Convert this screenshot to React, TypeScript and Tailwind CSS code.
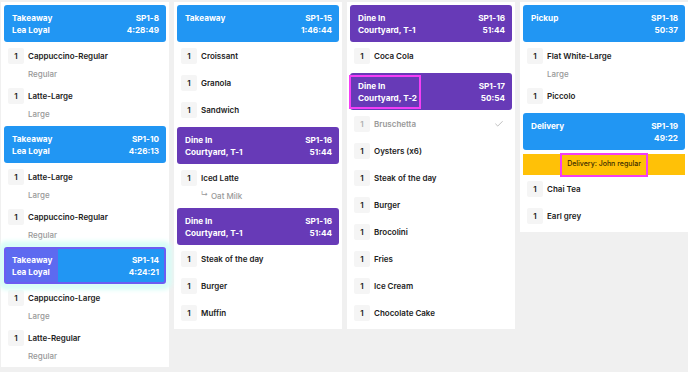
import { Check } from 'lucide-react';
import clsx from 'clsx';

type Item = {
  name: string;
  mod?: string;
  sub?: string;
  done?: boolean;
};

type Order = {
  type: string;
  where?: string;
  id: string;
  time: string;
  kind: 'blue' | 'purple';
  mark?: 'pink' | 'drag';
  banner?: string;
  items: Item[];
};

const columns: Order[][] = [
  [
    {
      type: 'Takeaway',
      where: 'Lea Loyal',
      id: 'SP1-8',
      time: '4:28:49',
      kind: 'blue',
      items: [
        { name: 'Cappuccino-Regular', mod: 'Regular' },
        { name: 'Latte-Large', mod: 'Large' },
      ],
    },
    {
      type: 'Takeaway',
      where: 'Lea Loyal',
      id: 'SP1-10',
      time: '4:26:13',
      kind: 'blue',
      items: [
        { name: 'Latte-Large', mod: 'Large' },
        { name: 'Cappuccino-Regular', mod: 'Regular' },
      ],
    },
    {
      type: 'Takeaway',
      where: 'Lea Loyal',
      id: 'SP1-14',
      time: '4:24:21',
      kind: 'blue',
      mark: 'drag',
      items: [
        { name: 'Cappuccino-Large', mod: 'Large' },
        { name: 'Latte-Regular', mod: 'Regular' },
      ],
    },
  ],
  [
    {
      type: 'Takeaway',
      id: 'SP1-15',
      time: '1:46:44',
      kind: 'blue',
      items: [{ name: 'Croissant' }, { name: 'Granola' }, { name: 'Sandwich' }],
    },
    {
      type: 'Dine In',
      where: 'Courtyard, T-1',
      id: 'SP1-16',
      time: '51:44',
      kind: 'purple',
      items: [{ name: 'Iced Latte', sub: 'Oat Milk' }],
    },
    {
      type: 'Dine In',
      where: 'Courtyard, T-1',
      id: 'SP1-16',
      time: '51:44',
      kind: 'purple',
      items: [{ name: 'Steak of the day' }, { name: 'Burger' }, { name: 'Muffin' }],
    },
  ],
  [
    {
      type: 'Dine In',
      where: 'Courtyard, T-1',
      id: 'SP1-16',
      time: '51:44',
      kind: 'purple',
      items: [{ name: 'Coca Cola' }],
    },
    {
      type: 'Dine In',
      where: 'Courtyard, T-2',
      id: 'SP1-17',
      time: '50:54',
      kind: 'purple',
      mark: 'pink',
      items: [
        { name: 'Bruschetta', done: true },
        { name: 'Oysters (x6)' },
        { name: 'Steak of the day' },
        { name: 'Burger' },
        { name: 'Brocolini' },
        { name: 'Fries' },
        { name: 'Ice Cream' },
        { name: 'Chocolate Cake' },
      ],
    },
  ],
  [
    {
      type: 'Pickup',
      id: 'SP1-18',
      time: '50:37',
      kind: 'blue',
      items: [{ name: 'Flat White-Large', mod: 'Large' }, { name: 'Piccolo' }],
    },
    {
      type: 'Delivery',
      id: 'SP1-19',
      time: '49:22',
      kind: 'blue',
      banner: 'Delivery: John regular',
      items: [{ name: 'Chai Tea' }, { name: 'Earl grey' }],
    },
  ],
];

function Header({ order }: { order: Order }) {
  const drag = order.mark === 'drag';
  return (
    <div
      className={clsx(
        'relative flex justify-between rounded-[3px] text-white font-bold text-[8.2px] leading-[12px]',
        order.kind === 'blue' ? 'bg-[#2196f3]' : 'bg-[#673ab7]',
        drag && 'border-2 border-[#6d5cf2] shadow-[0_0_4px_6px_#d9fdf7]'
      )}
    >
      <div
        className={clsx(
          drag ? 'pl-[6px] pr-[6px] py-[4.5px] bg-[#5d6af0] rounded-l-[2px]' : 'pl-2 pr-2 py-[6.5px]'
        )}
      >
        <div>{order.type}</div>
        {order.where && <div>{order.where}</div>}
      </div>
      <div className={clsx('text-right', drag ? 'pr-[5px] py-[4.5px]' : 'pr-[7px] py-[6.5px]')}>
        <div>{order.id}</div>
        <div>{order.time}</div>
      </div>
      {order.mark === 'pink' && (
        <div className="absolute left-[-1px] top-[2px] bottom-[1px] w-[72px] border-2 border-[#f43ef5]" />
      )}
    </div>
  );
}

function Row({ item }: { item: Item }) {
  return (
    <>
      <div className="flex items-center h-[27px] pl-1 pr-2">
        <span
          className={clsx(
            'flex items-center justify-center w-4 h-4 rounded-[2px] bg-[#f5f5f5] font-semibold',
            item.done ? 'text-[#b0b0b0]' : 'text-[#222222]'
          )}
        >
          1
        </span>
        <span className={clsx('ml-1 font-semibold', item.done ? 'text-[#9a9a9a]' : 'text-[#222222]')}>
          {item.name}
        </span>
        {item.done && <Check className="ml-auto h-[10px] w-[10px] text-[#999999]" strokeWidth={1.5} />}
      </div>
      {item.mod && (
        <div className="flex items-center h-[17px] -mt-1 pl-[24px] font-medium text-[#999999]">{item.mod}</div>
      )}
      {item.sub && (
        <div className="flex items-center h-[17px] -mt-1 pl-[24px] font-medium text-[#999999]">
          <span className="text-[7px] mr-[3px]">↳</span>
          {item.sub}
        </div>
      )}
    </>
  );
}

export default function App() {
  return (
    <div className="min-h-[372px] bg-[#f0f0f0] pl-[1px] pt-[2px] font-['Inter',sans-serif] text-[8px]">
      <div className="flex items-start gap-[5px]">
        {columns.map((col, ci) => (
          <div key={ci} className="w-[168px] bg-white p-[3px] flex flex-col gap-1">
            {col.map((order, oi) => (
              <div key={oi}>
                <Header order={order} />
                {order.banner && (
                  <div className="mt-1 flex items-center justify-center h-[21px] bg-[#ffc107]">
                    <span className="border-2 border-[#f43ef5] px-[5px] h-[24px] flex items-center font-medium text-[7px] text-[#3b2c00]">
                      {order.banner}
                    </span>
                  </div>
                )}
                {order.items.map((item, ii) => (
                  <Row key={ii} item={item} />
                ))}
              </div>
            ))}
          </div>
        ))}
      </div>
    </div>
  );
}
